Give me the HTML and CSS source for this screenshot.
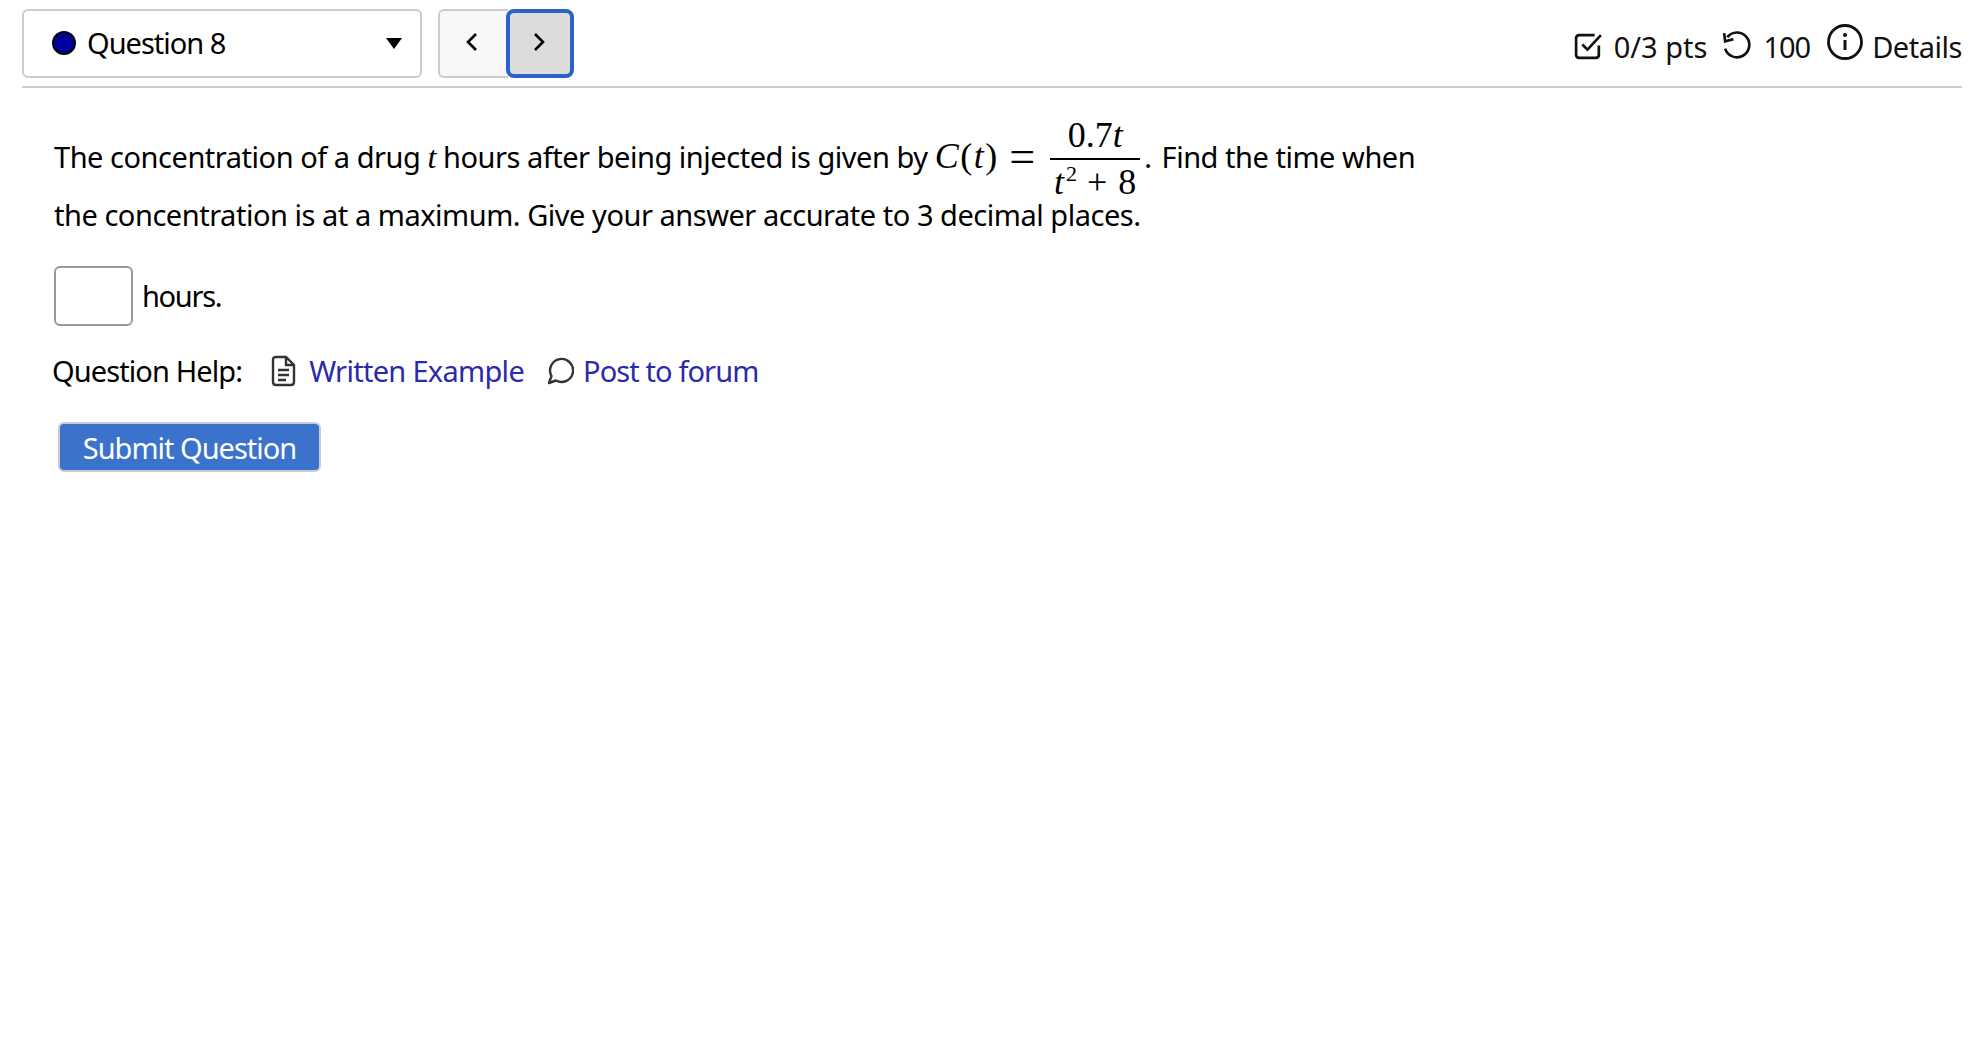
FILE: index.html
```html
<!DOCTYPE html>
<html lang="en">
<head>
  <meta charset="UTF-8">
  <title>Question 8</title>
  <link rel="stylesheet" href="styles.css">
</head>
<body>
  <div class="top-bar">
    <div class="nav-group">
      <div class="question-select">
        <span class="status-dot"></span>
        <span class="question-name">Question 8</span>
        <span class="caret"></span>
      </div>
      <div class="pager">
        <button class="pager-btn">
          <svg width="16" height="22" viewBox="0 0 16 22"><path d="M12 3 L4 11 L12 19" fill="none" stroke="#000" stroke-width="2.6"/></svg>
        </button>
        <button class="pager-btn pager-active">
          <svg width="16" height="22" viewBox="0 0 16 22"><path d="M4 3 L12 11 L4 19" fill="none" stroke="#000" stroke-width="2.6"/></svg>
        </button>
      </div>
    </div>
    <div class="meta">
      <svg class="meta-icon" width="31" height="31" viewBox="0 0 30 30"><path d="M25 15 V24 Q25 27 22 27 H6 Q3 27 3 24 V8 Q3 5 6 5 H21" fill="none" stroke="#111" stroke-width="2.6"/><path d="M9 14 L14 19 L27 5" fill="none" stroke="#111" stroke-width="2.6"/></svg>
      <span class="meta-text points">0/3 pts</span>
      <svg class="meta-icon retry" width="33" height="33" viewBox="0 0 32 32"><path d="M7 8 A12 12 0 1 1 5 19" fill="none" stroke="#111" stroke-width="2.6"/><path d="M4 4 L5 12 L13 10" fill="none" stroke="#111" stroke-width="2.6"/></svg>
      <span class="meta-text attempts">100</span>
      <svg class="meta-icon info" width="38" height="38" viewBox="0 0 38 38"><circle cx="19" cy="19" r="16.5" fill="none" stroke="#111" stroke-width="2.8"/><circle cx="19" cy="12" r="2" fill="#111"/><path d="M19 17 V27" stroke="#111" stroke-width="3"/></svg>
      <span class="meta-text">Details</span>
    </div>
  </div>

  <div class="question">
    <p class="line-one">The concentration of a drug <i class="math-var">t</i> hours after being injected is given by <span class="math"><i>C</i>(<i>t</i>) <span class="equals">=</span> <span class="frac"><span class="frac-top">0.7<i>t</i></span><span class="frac-bottom"><i>t</i><sup>2</sup><span class="plus">+</span>8</span></span></span><span class="frac-dot">.</span> Find the time when</p>
    <p class="line-two">the concentration is at a maximum. Give your answer accurate to 3 decimal places.</p>
    <div class="answer-row">
      <input class="answer" type="text">
      <span class="answer-unit">hours.</span>
    </div>
    <div class="help-row">
      <span class="help-label">Question Help:</span>
      <svg class="help-icon" width="26" height="32" viewBox="0 0 26 32"><path d="M3 5 Q3 2 6 2 H16 L24 10 V27 Q24 30 21 30 H6 Q3 30 3 27 Z M16 2 V10 H24" fill="none" stroke="#333" stroke-width="2.4"/><path d="M8 15 H19 M8 20 H19 M8 25 H16" stroke="#333" stroke-width="2.4"/></svg>
      <a class="help-link" href="#">Written Example</a>
      <svg class="help-icon forum" width="28" height="28" viewBox="0 0 28 28"><path d="M3 26 L5.5 19 A11.5 11.5 0 1 1 10 23.5 Z" fill="none" stroke="#333" stroke-width="2.4" stroke-linejoin="round"/></svg>
      <a class="help-link post-link" href="#">Post to forum</a>
    </div>
    <button class="submit">Submit Question</button>
  </div>
</body>
</html>
```

FILE: styles.css
```css
body {
  margin: 0;
  padding: 9px 24px 0 22px;
  font-family: "Noto Sans", sans-serif;
  font-size: 29px;
  letter-spacing: -0.47px;
  color: #000;
  background-color: #fff;
}

.top-bar {
  display: flex;
  justify-content: space-between;
  align-items: flex-start;
  height: 77px;
  border-bottom: 2px solid #ccc;
}

.nav-group {
  display: flex;
  gap: 16px;
}

.question-select {
  display: flex;
  align-items: center;
  box-sizing: border-box;
  width: 400px;
  height: 69px;
  padding: 0 18px 0 28px;
  border: 2px solid #ccc;
  border-radius: 6px;
}

.status-dot {
  box-sizing: border-box;
  width: 24px;
  height: 24px;
  margin: -2px 11px 0 0;
  background-color: #00009c;
  border: 2px solid #000;
  border-radius: 50%;
}

.question-name {
  flex: 1;
  margin-top: -2px;
  letter-spacing: -1px;
}

.caret {
  width: 0;
  height: 0;
  border-left: 8px solid transparent;
  border-right: 8px solid transparent;
  border-top: 11px solid #000;
}

.pager {
  display: flex;
}

.pager-btn {
  box-sizing: border-box;
  width: 70px;
  height: 69px;
  padding: 0 4px 0 0;
  background-color: #f7f7f7;
  border: 2px solid #ccc;
  border-right: none;
  border-radius: 6px 0 0 6px;
}

.pager-active {
  width: 68px;
  margin-left: -2px;
  padding: 0 2px 0 0;
  background-color: #dcdcdc;
  border: 4px solid #2b62c8;
  border-radius: 8px;
}

.meta {
  display: flex;
  align-items: center;
  height: 69px;
  gap: 10px;
  color: #111;
}

.meta-icon {
  flex: none;
  margin-top: 3px;
}

.meta-text {
  margin-top: 5px;
}

.points {
  letter-spacing: 0;
}

.attempts {
  letter-spacing: -1px;
}

.retry {
  margin-left: 3px;
}

.info {
  margin: -4px -2px 0 6px;
}

.question {
  padding-left: 32px;
}

.line-one {
  margin: 24px 0 0;
  white-space: nowrap;
}

.line-two {
  margin: -13px 0 0;
}

.math-var {
  font-family: "Liberation Serif", serif;
  font-size: 32px;
}

.math {
  font-family: "Liberation Serif", serif;
  font-size: 36px;
  letter-spacing: 1.5px;
}

.equals {
  font-size: 46px;
  line-height: 0;
  vertical-align: -4px;
}

.frac {
  display: inline-flex;
  flex-direction: column;
  align-items: center;
  vertical-align: middle;
  width: 90px;
  margin: 0 0 4px 3px;
}

.frac-top {
  line-height: 46px;
  letter-spacing: 0;
}

.frac-bottom {
  align-self: stretch;
  text-align: center;
  line-height: 44px;
  letter-spacing: 0;
  border-top: 2px solid #000;
}

.frac-bottom sup {
  margin-left: 2px;
  font-size: 22px;
  line-height: 0;
}

.plus {
  margin: 0 11px 0 10px;
}

.frac-dot {
  margin: 0 3px 0 4px;
}

.answer-row {
  display: flex;
  align-items: center;
  gap: 9px;
  margin-top: 32px;
}

.answer {
  box-sizing: border-box;
  width: 79px;
  height: 60px;
  border: 2px solid #999;
  border-radius: 6px;
}

.answer-unit {
  margin-top: -2px;
  letter-spacing: -1.3px;
}

.help-row {
  display: flex;
  align-items: center;
  margin: 25px 0 0 -2px;
}

.help-label {
  margin-right: 28px;
  letter-spacing: -0.9px;
}

.help-link {
  color: #2b2ba8;
  text-decoration: none;
  letter-spacing: -0.7px;
}

.post-link {
  letter-spacing: -0.9px;
}

.help-icon {
  margin-right: 13px;
}

.forum {
  margin: 0 9px 0 22px;
}

.submit {
  display: block;
  width: 263px;
  height: 50px;
  margin: 32px 0 0 4px;
  padding: 0;
  font-family: inherit;
  font-size: 29px;
  letter-spacing: -1px;
  color: #fff;
  background-color: #3b73cc;
  border: 2px solid #ccc;
  border-radius: 6px;
}
```
